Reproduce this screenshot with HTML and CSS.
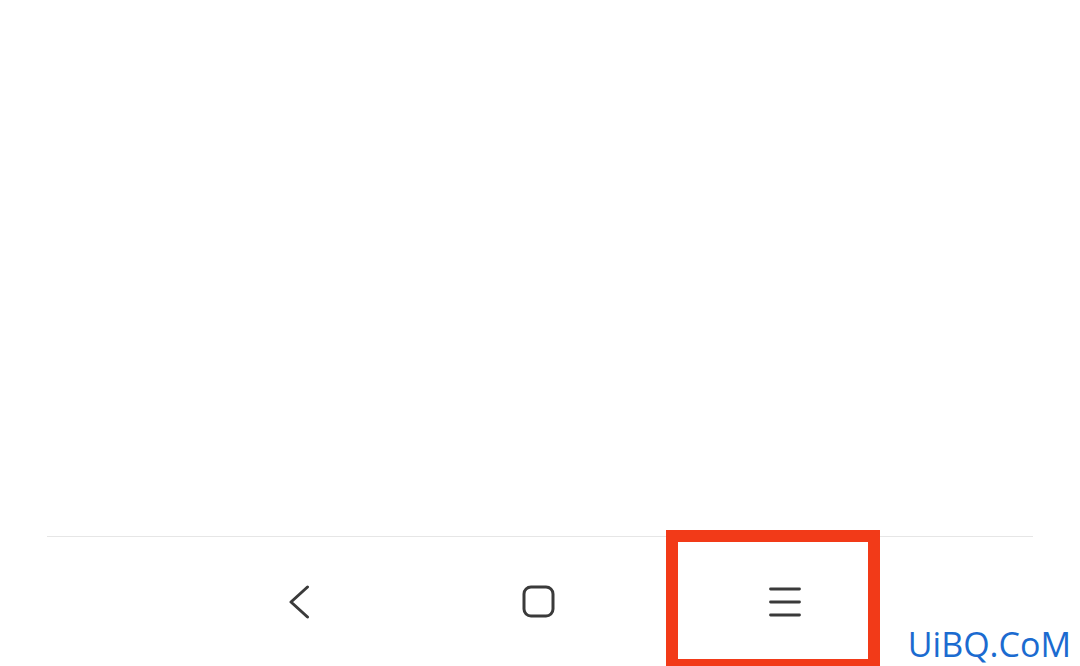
FILE: index.html
```html
<html>
  <head>
    <meta charset="utf-8" />
    <meta name="viewport" content="width=device-width, initial-scale=1" />
    <title>Navigation bar</title>
    <link rel="stylesheet" href="styles.css">
  </head>
  <body>
    <div class="screen">
      <div class="content"></div>
      <div class="navbar">
        <div class="nav-item back">
          <!-- back -->
          <svg width="22" height="34" viewBox="0 0 22 34">
            <path d="M19.5 2 L3 17 L19.5 32" fill="none" stroke="#3a3a3a" stroke-width="3" stroke-linecap="round" stroke-linejoin="round"/>
          </svg>
        </div>
        <div class="nav-item">
          <!-- home -->
          <svg width="33" height="33" viewBox="0 0 33 33">
            <rect x="2" y="2" width="29" height="29" rx="7" fill="none" stroke="#3a3a3a" stroke-width="3"/>
          </svg>
        </div>
        <div class="nav-item menu">
          <!-- recents / menu -->
          <svg width="32" height="30" viewBox="0 0 32 30">
            <path d="M1.5 2 H30.5 M1.5 15 H30.5 M1.5 28 H30.5" fill="none" stroke="#3a3a3a" stroke-width="2.8" stroke-linecap="round"/>
          </svg>
        </div>
        <div class="highlight"></div>
      </div>
      <div class="watermark">UiBQ.CoM</div>
    </div>
  </body>
</html>
```

FILE: styles.css
```css
body {
  margin: 0;
  background: #ffffff;
  font-family: "Open Sans", "Liberation Sans", sans-serif;
  overflow: hidden;
}
.screen {
  position: relative;
  height: 666px;
  display: flex;
  flex-direction: column;
}
.content {
  flex-grow: 1;
}
.navbar {
  position: relative;
  height: 129px;
  margin: 0 47px;
  border-top: 1px solid #e6e6e6;
  display: flex;
  justify-content: center;
  align-items: center;
}
.nav-item {
  width: 243px;
  display: flex;
  justify-content: center;
  align-items: center;
}
.nav-item svg {
  display: block;
}
.back {
  padding-left: 8px;
  box-sizing: border-box;
}
.menu {
  padding-left: 4px;
}
.highlight {
  position: absolute;
  left: 619px;
  top: -7px;
  width: 214px;
  height: 141px;
  box-sizing: border-box;
  border: 12px solid #f23a18;
}
.watermark {
  position: absolute;
  right: 9px;
  bottom: 2px;
  font-size: 34px;
  line-height: 40px;
  color: #1b6bd0;
}
```
